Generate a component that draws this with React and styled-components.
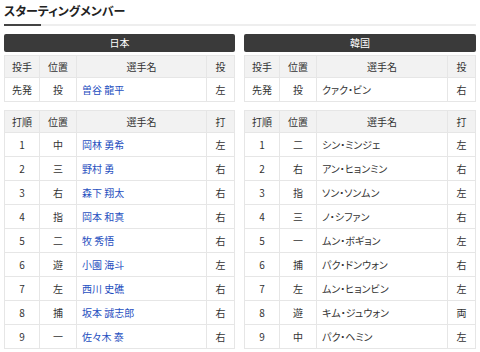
import React from "react";
import styled, { createGlobalStyle } from "styled-components";

const GlobalStyle = createGlobalStyle`
  body {
    margin: 0;
    background: #fff;
    font-family: "Noto Sans CJK JP", "Noto Sans", sans-serif;
    color: #333;
  }
`;

const Page = styled.div`
  padding: 0 4px;
  width: 472px;
`;

const Title = styled.h2`
  margin: 0;
  padding: 2px 0 5px;
  font-size: 12px;
  line-height: 17px;
  font-weight: 700;
  color: #222;
  font-feature-settings: "palt";
  border-bottom: 2px solid #eeeeee;
  position: relative;

  &::after {
    content: "";
    position: absolute;
    left: 0;
    bottom: -2px;
    width: 37px;
    height: 2px;
    background: #444;
  }
`;

const Columns = styled.div`
  display: grid;
  grid-template-columns: 231px 232px;
  column-gap: 9px;
  margin-top: 8px;
`;

const TeamBar = styled.div`
  height: 18px;
  line-height: 18px;
  background: #3a3a3a;
  border-radius: 2px;
  color: #fff;
  text-align: center;
  font-size: 10px;
  margin-bottom: 3px;
`;

const Table = styled.table`
  width: 100%;
  border-collapse: collapse;
  table-layout: fixed;
  font-size: 10px;
  margin-bottom: ${p => (p.$gap ? "8px" : "0")};
`;

const Th = styled.th`
  background: #f2f2f2;
  font-weight: 400;
  color: #333;
  height: 21px;
  padding: 0;
  border: 1px solid #e6e6e6;
  text-align: center;
`;

const Td = styled.td`
  height: 23px;
  padding: 0 ${p => (p.$left ? "5px" : "0")};
  border: 1px solid #e6e6e6;
  text-align: ${p => (p.$left ? "left" : "center")};
  color: ${p => (p.$link ? "#1f4fc0" : "#333")};
  font-feature-settings: ${p => (p.$left ? '"palt"' : "normal")};
  white-space: nowrap;
`;

const Cols = () => (
  <colgroup>
    <col style={{ width: "35px" }} />
    <col style={{ width: "37px" }} />
    <col />
    <col style={{ width: "28px" }} />
  </colgroup>
);

const teams = [
  {
    name: "日本",
    link: true,
    pitcher: { pos: "投", name: "曽谷 龍平", hand: "左" },
    order: [
      ["中", "岡林 勇希", "左"],
      ["三", "野村 勇", "右"],
      ["右", "森下 翔太", "右"],
      ["指", "岡本 和真", "右"],
      ["二", "牧 秀悟", "右"],
      ["遊", "小園 海斗", "左"],
      ["左", "西川 史礁", "右"],
      ["捕", "坂本 誠志郎", "右"],
      ["一", "佐々木 泰", "右"]
    ]
  },
  {
    name: "韓国",
    link: false,
    pitcher: { pos: "投", name: "クァク・ビン", hand: "右" },
    order: [
      ["二", "シン・ミンジェ", "左"],
      ["右", "アン・ヒョンミン", "右"],
      ["指", "ソン・ソンムン", "左"],
      ["三", "ノ・シファン", "右"],
      ["一", "ムン・ボギョン", "左"],
      ["捕", "パク・ドンウォン", "右"],
      ["左", "ムン・ヒョンビン", "左"],
      ["遊", "キム・ジュウォン", "両"],
      ["中", "パク・ヘミン", "左"]
    ]
  }
];

const TeamPanel = ({ team }) => (
  <div>
    <TeamBar>{team.name}</TeamBar>
    <Table $gap>
      <Cols />
      <thead>
        <tr>
          <Th>投手</Th>
          <Th>位置</Th>
          <Th>選手名</Th>
          <Th>投</Th>
        </tr>
      </thead>
      <tbody>
        <tr>
          <Td>先発</Td>
          <Td>{team.pitcher.pos}</Td>
          <Td $left $link={team.link}>{team.pitcher.name}</Td>
          <Td>{team.pitcher.hand}</Td>
        </tr>
      </tbody>
    </Table>
    <Table>
      <Cols />
      <thead>
        <tr>
          <Th>打順</Th>
          <Th>位置</Th>
          <Th>選手名</Th>
          <Th>打</Th>
        </tr>
      </thead>
      <tbody>
        {team.order.map(([pos, name, hand], i) => (
          <tr key={i}>
            <Td>{i + 1}</Td>
            <Td>{pos}</Td>
            <Td $left $link={team.link}>{name}</Td>
            <Td>{hand}</Td>
          </tr>
        ))}
      </tbody>
    </Table>
  </div>
);

export default function App() {
  return (
    <>
      <GlobalStyle />
      <Page>
        <Title>スターティングメンバー</Title>
        <Columns>
          {teams.map(t => (
            <TeamPanel key={t.name} team={t} />
          ))}
        </Columns>
      </Page>
    </>
  );
}
